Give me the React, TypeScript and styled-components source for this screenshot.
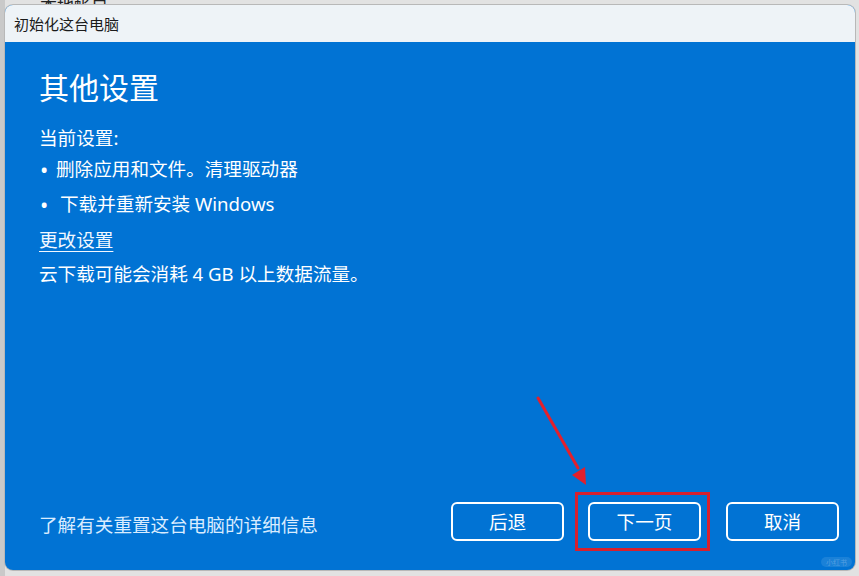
import styled, { createGlobalStyle } from "styled-components";

const GlobalStyle = createGlobalStyle`
  html, body {
    margin: 0;
    padding: 0;
    background: #d9d9d9;
  }
  body {
    width: 859px;
    height: 576px;
    overflow: hidden;
    font-family: "Noto Sans", "Noto Sans CJK SC", sans-serif;
  }
`;

export default function App() {
  return (
    <>
      <GlobalStyle />
      <Page>
        <Backdrop>本地帐户</Backdrop>
        <Dialog>
          <TitleBar>初始化这台电脑</TitleBar>
          <Body>
            <Main>
              <Heading>其他设置</Heading>
              <Line $top={15}>当前设置:</Line>
              <Line $top={1}>
                <Dot>•</Dot>
                <BulletText $indent={6}>删除应用和文件。清理驱动器</BulletText>
              </Line>
              <Line $top={5}>
                <Dot>•</Dot>
                <BulletText $indent={10}>下载并重新安装 Windows</BulletText>
              </Line>
              <Line $top={6}>
                <Link>更改设置</Link>
              </Line>
              <Line $top={4}>云下载可能会消耗 4 GB 以上数据流量。</Line>
            </Main>
            <Footer>
              <InfoText>了解有关重置这台电脑的详细信息</InfoText>
              <Buttons>
                <Button>后退</Button>
                <Highlight>
                  <Button>下一页</Button>
                </Highlight>
                <Button>取消</Button>
              </Buttons>
            </Footer>
            <Arrow width="70" height="110" viewBox="0 0 70 110">
              <line x1="7" y1="6" x2="47" y2="76" stroke="#e3202c" strokeWidth="3" strokeLinecap="round" />
              <polygon points="55,93 41,83 54,75" fill="#e3202c" />
            </Arrow>
            <Watermark>小红书</Watermark>
          </Body>
        </Dialog>
      </Page>
    </>
  );
}

const Page = styled.div`
  width: 859px;
  height: 576px;
  display: flex;
  flex-direction: column;
  background: linear-gradient(90deg, #c9c9c9 0, #c9c9c9 5px, #e2e2e2 5px);
`;

const Backdrop = styled.div`
  height: 5px;
  overflow: hidden;
  padding-left: 40px;
  font-size: 17px;
  line-height: 10px;
  color: #222;
  font-family: "Noto Sans CJK SC", sans-serif;
`;

const Dialog = styled.div`
  margin: 0 4px 0 5px;
  height: 565px;
  display: flex;
  flex-direction: column;
  border-radius: 8px;
  overflow: hidden;
  box-shadow: 0 0 0 1px #b8b8b8;
  background: #0173d4;
`;

const TitleBar = styled.div`
  height: 37px;
  flex-shrink: 0;
  display: flex;
  align-items: center;
  padding-left: 9px;
  padding-bottom: 1px;
  box-sizing: border-box;
  background: #eef3f7;
  color: #1b1b1b;
  font-size: 15px;
  font-family: "Noto Sans CJK SC", sans-serif;
`;

const Body = styled.div`
  position: relative;
  flex: 1;
  display: flex;
  flex-direction: column;
  color: #fff;
`;

const Main = styled.div`
  flex: 1;
  display: flex;
  flex-direction: column;
  padding: 26px 0 0 34px;
`;

const Heading = styled.h1`
  margin: 0;
  font-size: 30px;
  line-height: 40px;
  font-weight: 400;
`;

const Line = styled.div<{ $top: number }>`
  margin-top: ${({ $top }) => $top}px;
  display: flex;
  align-items: center;
  height: 30px;
  font-size: 18.6px;
  line-height: 30px;
`;

const Dot = styled.span`
  font-size: 22px;
  width: 10px;
  margin-left: 1px;
`;

const BulletText = styled.span<{ $indent: number }>`
  margin-left: ${({ $indent }) => $indent}px;
`;

const Link = styled.span`
  text-decoration: underline;
  text-underline-offset: 4px;
  text-decoration-thickness: 1px;
  color: #f2f8ff;
`;

const Footer = styled.div`
  display: flex;
  align-items: center;
  justify-content: space-between;
  padding: 0 16px 19px 34px;
`;

const InfoText = styled.span`
  font-size: 18.6px;
  color: #d9ecff;
  margin-top: 3px;
`;

const Buttons = styled.div`
  display: flex;
  align-items: center;
`;

const Button = styled.button`
  width: 113px;
  height: 39px;
  border: 2px solid #fff;
  border-radius: 6px;
  background: transparent;
  color: #fff;
  font-family: "Noto Sans CJK SC", sans-serif;
  font-size: 18.6px;
  padding: 0 0 2px;
`;

const Highlight = styled.div`
  display: flex;
  border: 3px solid #d7202e;
  padding: 7px 6px 7px 10px;
  margin: 0 16px 0 11px;
`;

const Arrow = styled.svg`
  position: absolute;
  left: 526px;
  top: 350px;
`;

const Watermark = styled.div`
  position: absolute;
  right: 3px;
  bottom: 3px;
  padding: 0 5px;
  border-radius: 6px;
  background: rgba(255, 255, 255, 0.1);
  color: rgba(255, 255, 255, 0.25);
  font-size: 7px;
  line-height: 10px;
  font-family: "Noto Sans CJK SC", sans-serif;
`;
